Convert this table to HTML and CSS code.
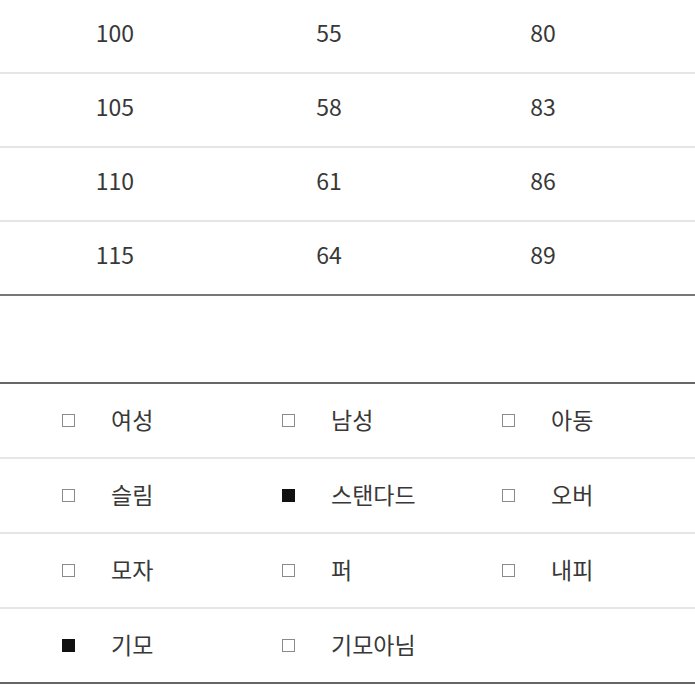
FILE: index.html
```html
<!DOCTYPE html>
<html lang="ko">
<head>
<meta charset="utf-8">
<link rel="stylesheet" href="styles.css">
</head>
<body>
<div class="size-table">
  <div class="row"><span>100</span><span>55</span><span>80</span></div>
  <div class="row"><span>105</span><span>58</span><span>83</span></div>
  <div class="row"><span>110</span><span>61</span><span>86</span></div>
  <div class="row last"><span>115</span><span>64</span><span>89</span></div>
</div>
<div class="spacer"></div>
<div class="options">
  <div class="orow">
    <div class="opt"><i class="box"></i><span>여성</span></div>
    <div class="opt"><i class="box"></i><span>남성</span></div>
    <div class="opt"><i class="box"></i><span>아동</span></div>
  </div>
  <div class="orow">
    <div class="opt"><i class="box"></i><span>슬림</span></div>
    <div class="opt"><i class="box on"></i><span>스탠다드</span></div>
    <div class="opt"><i class="box"></i><span>오버</span></div>
  </div>
  <div class="orow">
    <div class="opt"><i class="box"></i><span>모자</span></div>
    <div class="opt"><i class="box"></i><span>퍼</span></div>
    <div class="opt"><i class="box"></i><span>내피</span></div>
  </div>
  <div class="orow last">
    <div class="opt"><i class="box on"></i><span>기모</span></div>
    <div class="opt"><i class="box"></i><span>기모아님</span></div>
  </div>
</div>
</body>
</html>
```
FILE: styles.css
```css
html, body {
  margin: 0;
  padding: 0;
  background: #fff;
}
body {
  font-family: "Noto Sans CJK KR", "Noto Sans", sans-serif;
  font-size: 23px;
  color: #383838;
  width: 695px;
  overflow: hidden;
}
.size-table .row {
  display: grid;
  grid-template-columns: repeat(3, 214px);
  padding-left: 8px;
  height: 72px;
  align-items: center;
  border-bottom: 2px solid #e6e6e6;
  box-sizing: content-box;
}
.size-table .row span {
  text-align: center;
  margin-bottom: 8px;
  line-height: 1;
}
.size-table .row.last {
  border-bottom: 2px solid #777;
}
.spacer {
  height: 86px;
}
.options {
  border-top: 2px solid #666;
}
.orow {
  display: grid;
  grid-template-columns: repeat(3, 220px);
  padding-left: 62px;
  height: 73px;
  align-items: center;
  border-bottom: 2px solid #e6e6e6;
}
.orow.last {
  border-bottom: 2px solid #666;
}
.opt {
  display: flex;
  align-items: center;
  gap: 36px;
}
.opt span {
  line-height: 1;
  margin-bottom: 2px;
}
.box {
  display: block;
  width: 11px;
  height: 11px;
  border: 1.5px solid #8a8a8a;
  background: #fff;
}
.box.on {
  background: #111;
  border-color: #111;
}
```
